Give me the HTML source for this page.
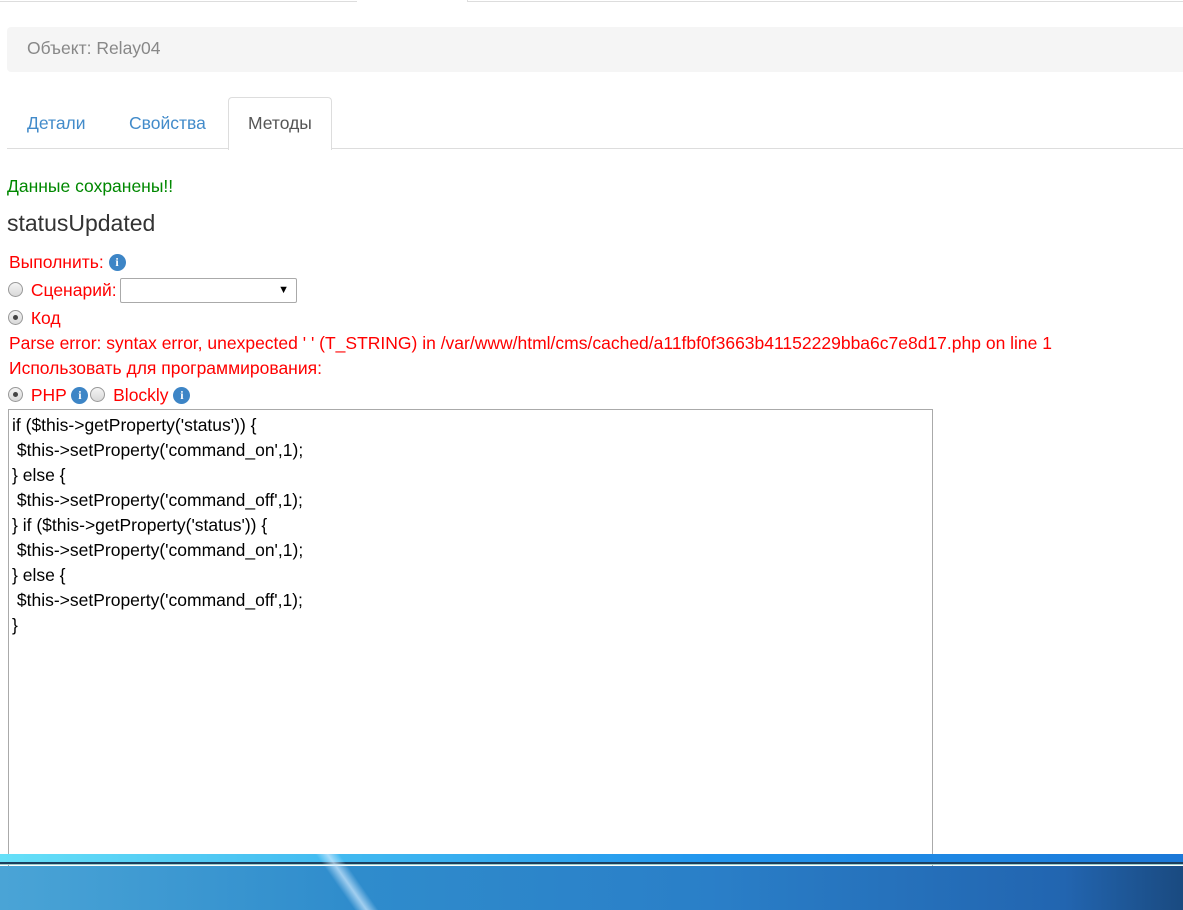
<!DOCTYPE html>
<html><head><meta charset="utf-8"><style>
*{margin:0;padding:0;box-sizing:border-box}
body{width:1183px;height:910px;overflow:hidden;background:#fff;font-family:"Liberation Sans",Arial,sans-serif;position:relative}
.a{position:absolute;white-space:nowrap}
.red{color:#f00;font-size:17.5px}
.info{display:inline-block;width:17px;height:17px;border-radius:50%;background:#3d85c6;color:#fff;font:bold 12px/17px "Liberation Serif",serif;text-align:center;vertical-align:2px}
.radio{display:inline-block;width:15px;height:15px;border-radius:50%;border:1px solid #999;background:linear-gradient(#f4f4f4,#d8d8d8);vertical-align:-1px;position:relative;margin-right:3px}
.radio.on:after{content:"";position:absolute;left:4px;top:4px;width:5px;height:5px;border-radius:50%;background:#444}
</style></head><body>
<div class="a" style="left:0;top:0;width:357px;height:2px;border-bottom:1px solid #ddd"></div>
<div class="a" style="left:467px;top:0;width:716px;height:2px;border-bottom:1px solid #ddd;border-left:1px solid #ddd"></div>
<div class="a" style="left:7px;top:27px;width:1190px;height:45px;background:#f5f5f5;border-radius:4px"></div>
<div class="a" style="left:27px;top:38px;font-size:17.5px;color:#888">Объект: Relay04</div>
<div class="a" style="left:7px;top:148px;width:1176px;height:1px;background:#ddd"></div>
<div class="a" style="left:228px;top:97px;width:104px;height:53px;background:#fff;border:1px solid #ddd;border-bottom:none;border-radius:4px 4px 0 0"></div>
<div class="a" style="left:27px;top:113px;font-size:17.5px;color:#428bca">Детали</div>
<div class="a" style="left:129px;top:113px;font-size:17.5px;color:#428bca">Свойства</div>
<div class="a" style="left:248px;top:113px;font-size:17.5px;color:#555">Методы</div>
<div class="a" style="left:7px;top:176px;font-size:17.5px;color:#080">Данные сохранены!!</div>
<div class="a" style="left:7px;top:210px;font-size:23px;color:#333">statusUpdated</div>
<div class="a red" style="left:9px;top:252px">Выполнить: <span class="info">i</span></div>
<div class="a red" style="left:8px;top:280px"><span class="radio"></span> Сценарий:</div>
<div class="a" style="left:120px;top:278px;width:177px;height:25px;border:1px solid #aaa;border-radius:2px;font-size:11px;text-align:right;padding:5px 7px 0 0;color:#000">▼</div>
<div class="a red" style="left:8px;top:308px"><span class="radio on"></span> Код</div>
<div class="a red" style="left:9px;top:333px">Parse error: syntax error, unexpected ' ' (T_STRING) in /var/www/html/cms/cached/a11fbf0f3663b41152229bba6c7e8d17.php on line 1</div>
<div class="a red" style="left:9px;top:358px">Использовать для программирования:</div>
<div class="a red" style="left:8px;top:385px"><span class="radio on"></span> PHP <span class="info">i</span> <span class="radio" style="margin-left:-3px"></span> Blockly <span class="info">i</span></div>
<div class="a" style="left:8px;top:409px;width:925px;height:460px;border:1px solid #aaa;border-bottom:none"></div>
<div class="a" style="left:12px;top:413px;font-size:17.5px;line-height:25px;color:#000;white-space:pre">if ($this-&gt;getProperty('status')) {
 $this-&gt;setProperty('command_on',1);
} else {
 $this-&gt;setProperty('command_off',1);
} if ($this-&gt;getProperty('status')) {
 $this-&gt;setProperty('command_on',1);
} else {
 $this-&gt;setProperty('command_off',1);
}</div>
<div class="a" style="left:0;top:854px;width:1183px;height:8px;background:linear-gradient(90deg,#66e0f8,#40b8f0 30%,#2196ee 60%,#1b78d8)"></div>
<div class="a" style="left:0;top:862px;width:1183px;height:3px;background:#1d3f5e;border-bottom:1px solid #9cc"></div>
<div class="a" style="left:0;top:866px;width:1183px;height:44px;background:linear-gradient(90deg,#4aa4d6,#2f8ccc 30%,#2a7fc8 60%,#2265b0 90%,#1a4a80)"></div>
<div class="a" style="left:335px;top:854px;width:24px;height:56px;background:linear-gradient(90deg,transparent,rgba(210,235,255,.7),transparent);transform:skewX(35deg)"></div>
</body></html>
